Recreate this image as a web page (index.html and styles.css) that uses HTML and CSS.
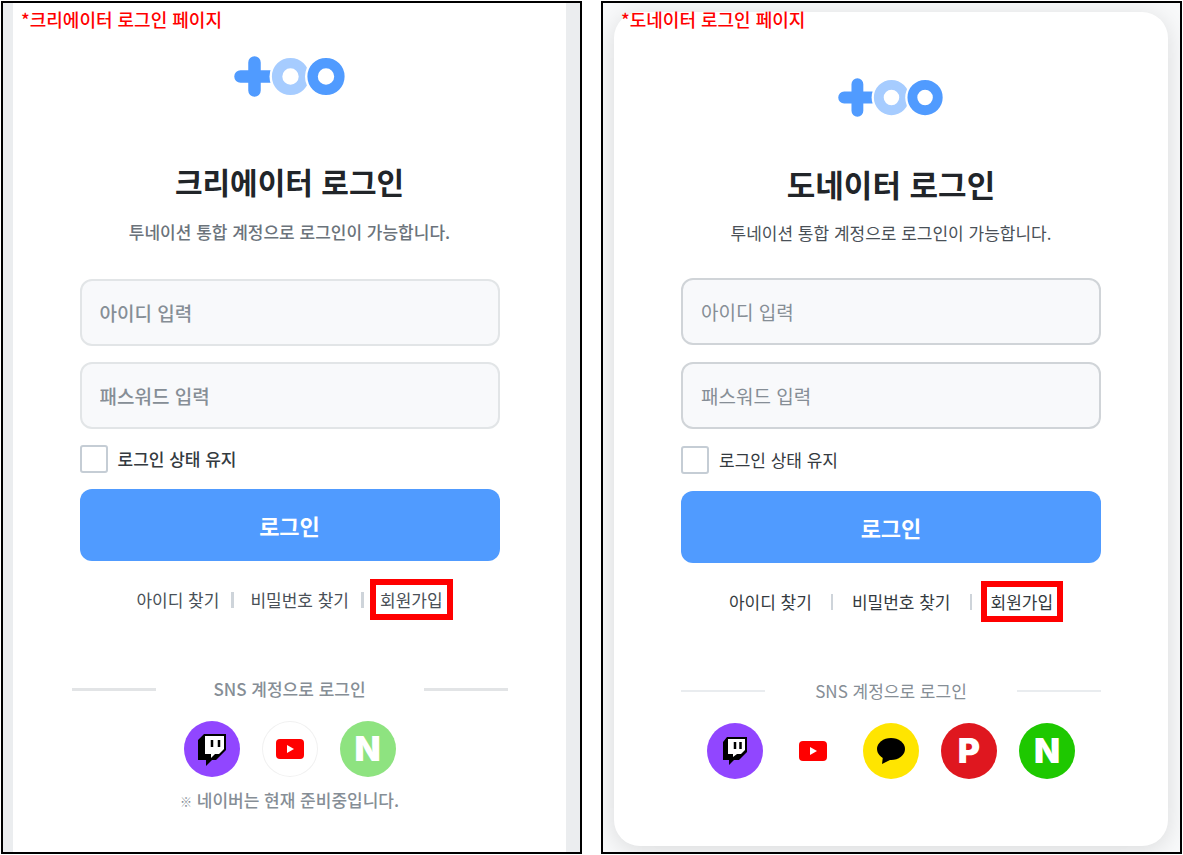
FILE: index.html
```html
<!DOCTYPE html>
<html lang="ko">
<head>
  <meta charset="UTF-8" />
  <title>투네이션 로그인</title>
  <meta name="viewport" content="width=device-width, initial-scale=1" />
  <link rel="stylesheet" href="styles.css">
</head>
<body>
  <div class="page">
    <!-- 크리에이터 -->
    <section class="frame creator">
      <p class="frame-label">*크리에이터 로그인 페이지</p>
      <div class="card">
        <svg class="logo" viewBox="234 56 112 42" role="img" aria-label="toonation">
          <path d="M240.500 76.500H270M254.500 62.500V90.500" stroke="#509bff" stroke-width="12.500" stroke-linecap="round" fill="none" />
          <circle cx="290.500" cy="76.500" r="21" fill="#fff" />
          <circle cx="290.500" cy="76.500" r="13.400" fill="none" stroke="#a6ccff" stroke-width="10.400" />
          <circle cx="326" cy="76.500" r="21" fill="#fff" />
          <circle cx="326" cy="76.500" r="13.400" fill="none" stroke="#509bff" stroke-width="10.400" />
        </svg>
        <h1>크리에이터 로그인</h1>
        <p class="subtitle">투네이션 통합 계정으로 로그인이 가능합니다.</p>

        <form class="login-form">
          <input class="field" type="text" placeholder="아이디 입력" aria-label="아이디" />
          <input class="field" type="password" placeholder="패스워드 입력" aria-label="패스워드" />
          <label class="keep"><input type="checkbox" /> 로그인 상태 유지</label>
          <button type="button" class="login-btn">로그인</button>
        </form>

        <nav class="links">
          <a href="#">아이디 찾기</a>
          <span class="bar"></span>
          <a href="#">비밀번호 찾기</a>
          <span class="bar"></span>
          <a href="#" class="signup">회원가입</a>
        </nav>

        <div class="sns-title"><span>SNS 계정으로 로그인</span></div>
        <div class="sns-list">
          <button type="button" class="sns twitch" aria-label="Twitch">
            <svg viewBox="0 0 56 56">
              <path d="M20 13H42V29L32 39H28L22 45V39H14V19Z" fill="#000" />
              <path d="M21 15H40V28L35 33H31L27 37V33H21Z" fill="#fff" />
              <path d="M28 19V26M35 19V26" stroke="#000" stroke-width="2.500" />
            </svg>
          </button>
          <button type="button" class="sns youtube" aria-label="YouTube">
            <svg viewBox="0 0 56 56">
              <rect x="14" y="18" width="28" height="20" rx="4" fill="#f00" />
              <path d="M25 24V32L32 28Z" fill="#fff" />
            </svg>
          </button>
          <button type="button" class="sns naver" aria-label="NAVER">N</button>
        </div>
        <p class="note"><span class="note-mark">※</span> 네이버는 현재 준비중입니다.</p>
      </div>
    </section>

    <!-- 도네이터 -->
    <section class="frame donator">
      <p class="frame-label">*도네이터 로그인 페이지</p>
      <div class="card">
        <svg class="logo" viewBox="234 56 112 42" role="img" aria-label="toonation">
          <path d="M240.500 76.500H270M254.500 62.500V90.500" stroke="#509bff" stroke-width="12.500" stroke-linecap="round" fill="none" />
          <circle cx="290.500" cy="76.500" r="21" fill="#fff" />
          <circle cx="290.500" cy="76.500" r="13.400" fill="none" stroke="#a6ccff" stroke-width="10.400" />
          <circle cx="326" cy="76.500" r="21" fill="#fff" />
          <circle cx="326" cy="76.500" r="13.400" fill="none" stroke="#509bff" stroke-width="10.400" />
        </svg>
        <h1>도네이터 로그인</h1>
        <p class="subtitle">투네이션 통합 계정으로 로그인이 가능합니다.</p>

        <form class="login-form">
          <input class="field" type="text" placeholder="아이디 입력" aria-label="아이디" />
          <input class="field" type="password" placeholder="패스워드 입력" aria-label="패스워드" />
          <label class="keep"><input type="checkbox" /> 로그인 상태 유지</label>
          <button type="button" class="login-btn">로그인</button>
        </form>

        <nav class="links">
          <a href="#">아이디 찾기</a>
          <span class="bar"></span>
          <a href="#">비밀번호 찾기</a>
          <span class="bar"></span>
          <a href="#" class="signup">회원가입</a>
        </nav>

        <div class="sns-title"><span>SNS 계정으로 로그인</span></div>
        <div class="sns-list">
          <button type="button" class="sns twitch" aria-label="Twitch">
            <svg viewBox="0 0 56 56">
              <path d="M20 14H40V29L32 37H27L22 42V37H16V19Z" fill="#000" />
              <path d="M21 16H38V27L34 31H30L26 34V31H21Z" fill="#fff" />
              <path d="M28 19V26M33.500 19V26" stroke="#000" stroke-width="2.500" />
            </svg>
          </button>
          <button type="button" class="sns youtube" aria-label="YouTube">
            <svg viewBox="0 0 56 56">
              <rect x="14" y="18" width="28" height="20" rx="4" fill="#f00" />
              <path d="M25 24V32L32 28Z" fill="#fff" />
            </svg>
          </button>
          <button type="button" class="sns kakao" aria-label="Kakao">
            <svg viewBox="0 0 56 56">
              <ellipse cx="28" cy="26" rx="14" ry="11" />
              <path d="M20 33L19 41L29 36Z" />
            </svg>
          </button>
          <button type="button" class="sns payco" aria-label="PAYCO">P</button>
          <button type="button" class="sns naver" aria-label="NAVER">N</button>
        </div>
      </div>
    </section>
  </div>
</body>
</html>
```

FILE: styles.css
```css
:root {
  --primary-color: #509bff;
  --text-color: #212529;
  --text-sub: #495057;
  --text-muted: #868e96;
  --field-color: #f8f9fb;
  --mark-color: #ff0000;
}

* {
  box-sizing: border-box;
  margin: 0;
  padding: 0;
}

body {
  font-family: 'Noto Sans CJK KR', sans-serif;
  font-size: 17px;
  line-height: 24px;
  color: var(--text-color);
  background: #fff;
}

button, input {
  font-family: inherit;
}

.page {
  display: grid;
  grid-template-columns: 1fr 1fr;
  gap: 19px;
  min-height: 100vh;
  padding: 1px;
}

.frame {
  position: relative;
  display: flex;
  border: 2px solid #000;
  overflow: hidden;
}

.creator {
  padding: 0 14px 0 10px;
  background: #ebedef;
}

.donator {
  padding: 9px 12px 6px 11px;
  background: #f8f9fa;
}

.frame-label {
  position: absolute;
  top: 4px;
  left: 18px;
  font-size: 18px;
  font-weight: 500;
  color: var(--mark-color);
}

.card {
  flex: 1;
  display: flex;
  flex-direction: column;
  align-items: center;
  padding: 53px 20px 20px;
  background: #fff;
}

.donator .card {
  padding-top: 66px;
  border-radius: 26px;
  box-shadow: 0 4px 24px rgba(0, 0, 0, 0.12);
}

.logo {
  width: 112px;
  height: 42px;
}

.donator .logo {
  width: 106px;
  height: 40px;
}

h1 {
  margin-top: 61px;
  font-size: 30px;
  font-weight: 700;
  line-height: 44px;
}

.donator h1 {
  margin-top: 44px;
  font-size: 31px;
}

.subtitle {
  margin-top: 17px;
  font-weight: 500;
  color: #6b737b;
}

.donator .subtitle {
  margin-top: 15px;
  font-weight: 400;
  color: var(--text-sub);
}

.login-form {
  display: flex;
  flex-direction: column;
  gap: 16px;
  width: 100%;
  max-width: 420px;
  margin-top: 35px;
}

.donator .login-form {
  gap: 17px;
  margin-top: 33px;
}

.field {
  width: 100%;
  height: 67px;
  padding: 0 18px;
  border: 2px solid #e2e5e7;
  border-radius: 12px;
  background: var(--field-color);
  font-size: 19px;
  font-weight: 500;
}

.donator .field {
  border-color: #d0d4d8;
  font-weight: 400;
}

.field::placeholder {
  color: var(--text-muted);
}

.keep {
  display: flex;
  align-items: center;
  gap: 10px;
  font-weight: 500;
  color: #343a40;
}

.donator .keep {
  font-weight: 400;
}

.keep input {
  appearance: none;
  width: 28px;
  height: 28px;
  border: 2px solid #c5cdd5;
  border-radius: 3px;
  background: #fff;
}

.login-btn {
  height: 72px;
  border: none;
  border-radius: 12px;
  background: var(--primary-color);
  color: #fff;
  font-size: 22px;
  font-weight: 700;
}

.links {
  display: flex;
  align-items: center;
  margin-top: 28px;
}

.links a {
  color: var(--text-sub);
  text-decoration: none;
  line-height: 21px;
}

.donator .links a {
  color: #343a40;
}

.bar {
  width: 3px;
  height: 16px;
  margin: 0 16px 0 12px;
  background: #ced4da;
}

.donator .bar {
  width: 2px;
  margin: 0 19px;
}

.links .signup {
  outline: 6px solid var(--mark-color);
  outline-offset: 4px;
}

.sns-title {
  display: flex;
  align-items: center;
  justify-content: space-between;
  width: 100%;
  max-width: 436px;
  margin-top: 67px;
  font-weight: 500;
  color: var(--text-muted);
}

.donator .sns-title {
  max-width: 420px;
  font-weight: 400;
}

.sns-title::before,
.sns-title::after {
  content: '';
  width: 84px;
  height: 3px;
  background: #e2e4e6;
}

.donator .sns-title::before,
.donator .sns-title::after {
  height: 2px;
  background: #e9ecef;
}

.sns-list {
  display: flex;
  gap: 22px;
  margin-top: 20px;
}

.sns {
  width: 56px;
  height: 56px;
  border: none;
  border-radius: 50%;
  background: #fff;
  color: #fff;
  font-family: Inter, sans-serif;
  font-size: 34px;
  font-weight: 900;
  line-height: 56px;
}

.sns svg {
  display: block;
  width: 56px;
  height: 56px;
}

.twitch {
  background: #9146ff;
}

.creator .youtube {
  box-shadow: inset 0 0 0 1px #f1f1f1;
}

.kakao {
  background: #ffe500;
}

.payco {
  background: #df171f;
}

.naver {
  background: #1ec800;
}

.creator .naver {
  background: #8ee380;
}

.note {
  margin-top: 11px;
  font-weight: 500;
  color: var(--text-muted);
}

.note-mark {
  font-size: 12px;
  font-weight: 700;
}

@media (max-width: 900px) {
  .page {
    grid-template-columns: 1fr;
  }
}
```
